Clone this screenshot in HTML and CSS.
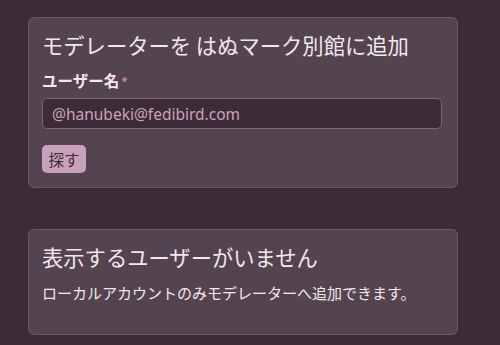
FILE: index.html
```html
<!DOCTYPE html>
<html lang="ja">
<head>
<meta charset="utf-8">
<link rel="stylesheet" href="styles.css">
</head>
<body>
<main class="page">
  <section class="card">
    <h2 class="card-title">モデレーターを はぬマーク別館に追加</h2>
    <label class="field-label">ユーザー名<span class="req">*</span></label>
    <input class="text-input" type="text" placeholder="@hanubeki@fedibird.com">
    <div class="actions"><button class="btn">探す</button></div>
  </section>
  <section class="card card-empty">
    <h2 class="card-title">表示するユーザーがいません</h2>
    <p class="card-text">ローカルアカウントのみモデレーターへ追加できます。</p>
  </section>
</main>
</body>
</html>
```
FILE: styles.css
```css
html, body {
  margin: 0;
  padding: 0;
  background: #3d2c37;
  font-family: "Noto Sans", "Noto Sans CJK JP", sans-serif;
  color: #f1e8ee;
}
.page {
  width: 430px;
  margin-left: 28px;
  padding-top: 17px;
  display: flex;
  flex-direction: column;
  gap: 41px;
}
.card {
  background: #544450;
  border: 1px solid #675862;
  border-radius: 6px;
  padding: 12px 14px 14px 13px;
  display: flex;
  flex-direction: column;
}
.card-title {
  margin: 0;
  font-size: 21.3px;
  font-weight: 400;
  line-height: 30px;
  font-family: "Noto Sans CJK JP", sans-serif;
}
.field-label {
  margin-top: 10px;
  font-size: 15.5px;
  font-weight: 700;
  line-height: 21px;
  font-family: "Noto Sans CJK JP", sans-serif;
}
.req {
  color: #c58a9e;
  margin-left: 2px;
  font-size: 13px;
}
.text-input {
  margin-top: 6px;
  box-sizing: border-box;
  width: 400px;
  height: 31px;
  background: #3d2c37;
  border: 1px solid #776873;
  border-radius: 5px;
  padding: 0 9px;
  font-family: "Noto Sans", sans-serif;
  font-size: 15.5px;
  color: #f1e8ee;
  outline: none;
}
.text-input::placeholder {
  color: #c9a2bc;
  opacity: 1;
}
.actions {
  margin-top: 16px;
  display: flex;
}
.btn {
  background: #c9a0bc;
  border: none;
  border-radius: 5px;
  height: 28px;
  width: 44px;
  padding: 0;
  font-family: "Noto Sans CJK JP", sans-serif;
  font-size: 15.5px;
  color: #3d2c37;
}
.card-empty {
  padding-bottom: 30px;
}
.card-text {
  margin: 10px 0 0;
  font-size: 15px;
  line-height: 22px;
  font-family: "Noto Sans CJK JP", sans-serif;
}
```
